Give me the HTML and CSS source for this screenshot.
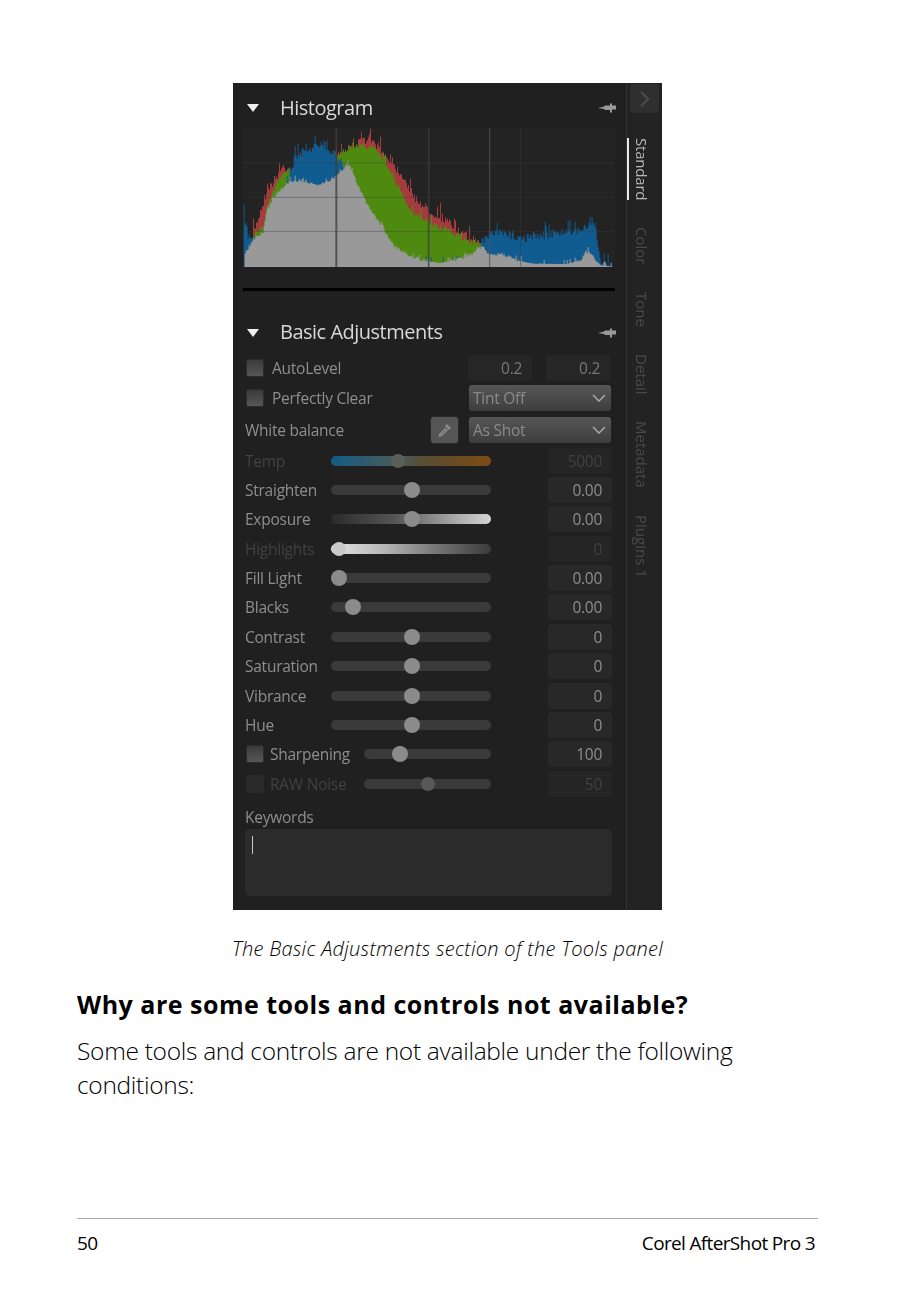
FILE: index.html
```html
<!DOCTYPE html>
<html lang="en">
<head>
<meta charset="utf-8">
<title>Corel AfterShot Pro 3 - page 50</title>
<link rel="stylesheet" href="styles.css">
</head>
<body>
<div class="page">
  <figure class="shot">
    <div class="panel">
      <div class="main">
        <div class="head hist-head">
          <span class="tri"></span><span class="head-title">Histogram</span>
          <svg class="pin" viewBox="0 0 18 10"><path d="M0 5 L6 3.5 L7 2.5 L12 2.5 L12 0.5 L14 0.5 L14 2.5 L18 2.5 L18 6.5 L14 6.5 L14 9.5 L12 9.5 L12 7 L7 7 L6 6 Z"/></svg>
        </div>
        <svg class="histogram" id="histogram" viewBox="30 135 1116 420" preserveAspectRatio="none"></svg>
        <div class="divider"></div>
        <div class="head basic-head">
          <span class="tri"></span><span class="head-title">Basic Adjustments</span>
          <svg class="pin" viewBox="0 0 18 10"><path d="M0 5 L6 3.5 L7 2.5 L12 2.5 L12 0.5 L14 0.5 L14 2.5 L18 2.5 L18 6.5 L14 6.5 L14 9.5 L12 9.5 L12 7 L7 7 L6 6 Z"/></svg>
        </div>

        <div class="row top-row">
          <span class="check"></span><span class="label check-label">AutoLevel</span>
          <span class="spacer"></span>
          <span class="num small">0.2</span><span class="num small second">0.2</span>
        </div>
        <div class="row top-row">
          <span class="check"></span><span class="label check-label">Perfectly Clear</span>
          <span class="spacer"></span>
          <span class="select">Tint Off<svg class="chev" viewBox="0 0 14 8"><path d="M1 1 L7 7 L13 1"/></svg></span>
        </div>
        <div class="row top-row wb-row">
          <span class="label">White balance</span>
          <span class="spacer"></span>
          <span class="dropper"><svg viewBox="0 0 16 16"><path class="d-fill" d="M10 2 L14 6 L12 8 L8 4 Z"/><path class="d-line" d="M9 6 L3 12 L2.5 14 L4.5 13.5 L10.5 7.5"/></svg></span>
          <span class="select">As Shot<svg class="chev" viewBox="0 0 14 8"><path d="M1 1 L7 7 L13 1"/></svg></span>
        </div>

        <div class="row slider-row off">
          <span class="label name">Temp</span>
          <span class="track temp"><i class="thumb dim" style="left:42%"></i></span>
          <span class="num faint">5000</span>
        </div>
        <div class="row slider-row">
          <span class="label name">Straighten</span>
          <span class="track"><i class="thumb" style="left:50.5%"></i></span>
          <span class="num">0.00</span>
        </div>
        <div class="row slider-row">
          <span class="label name">Exposure</span>
          <span class="track exposure"><i class="thumb" style="left:50.5%"></i></span>
          <span class="num">0.00</span>
        </div>
        <div class="row slider-row off">
          <span class="label name">Highlights</span>
          <span class="track highlights"><i class="thumb under" style="left:5%"></i></span>
          <span class="num faint">0</span>
        </div>
        <div class="row slider-row">
          <span class="label name">Fill Light</span>
          <span class="track"><i class="thumb" style="left:5%"></i></span>
          <span class="num">0.00</span>
        </div>
        <div class="row slider-row">
          <span class="label name">Blacks</span>
          <span class="track"><i class="thumb" style="left:13.5%"></i></span>
          <span class="num">0.00</span>
        </div>
        <div class="row slider-row">
          <span class="label name">Contrast</span>
          <span class="track"><i class="thumb" style="left:50.5%"></i></span>
          <span class="num">0</span>
        </div>
        <div class="row slider-row">
          <span class="label name">Saturation</span>
          <span class="track"><i class="thumb" style="left:50.5%"></i></span>
          <span class="num">0</span>
        </div>
        <div class="row slider-row">
          <span class="label name">Vibrance</span>
          <span class="track"><i class="thumb" style="left:50.5%"></i></span>
          <span class="num">0</span>
        </div>
        <div class="row slider-row">
          <span class="label name">Hue</span>
          <span class="track"><i class="thumb" style="left:50.5%"></i></span>
          <span class="num">0</span>
        </div>
        <div class="row slider-row">
          <span class="check"></span><span class="label name-short">Sharpening</span>
          <span class="track short"><i class="thumb" style="left:28%"></i></span>
          <span class="num">100</span>
        </div>
        <div class="row slider-row off">
          <span class="check dim-check"></span><span class="label name-short">RAW Noise</span>
          <span class="track short"><i class="thumb tiny" style="left:50%"></i></span>
          <span class="num faint">50</span>
        </div>

        <div class="label keywords-label">Keywords</div>
        <div class="keywords"><span class="caret"></span></div>
      </div>

      <div class="side">
        <div class="collapse"><svg viewBox="0 0 12 20"><path d="M2 2 L10 10 L2 18"/></svg></div>
        <div class="tabs">
          <span class="tab active">Standard</span>
          <span class="tab">Color</span>
          <span class="tab">Tone</span>
          <span class="tab">Detail</span>
          <span class="tab">Metadata</span>
          <span class="tab">Plugins 1</span>
        </div>
      </div>
    </div>
    <figcaption class="caption">The Basic Adjustments section of the Tools panel</figcaption>
  </figure>

  <h2 class="title">Why are some tools and controls not available?</h2>
  <p class="body-text">Some tools and controls are not available under the following conditions:</p>

  <footer class="foot">
    <span>50</span>
    <span>Corel AfterShot Pro 3</span>
  </footer>
</div>
<script src="histogram.js"></script>
</body>
</html>
```

FILE: styles.css
```css
* { box-sizing: border-box; }
html, body { margin: 0; background: #fff; }
body { font-family: "Open Sans", "Noto Sans", sans-serif; color: #000; }

.page { width: 923px; height: 1314px; padding: 83px 105px 0 77px; overflow: hidden; }
.shot { margin: 0; }

.panel {
  display: flex;
  width: 429px;
  height: 827px;
  margin-left: 156px;
  background: #1f1f1f;
}
.main { width: 393px; padding-left: 10px; background: #202020; filter: blur(0.35px); }

.head { display: flex; align-items: center; color: #d8d8d8; font-size: 20px; }
.hist-head { height: 45px; padding-top: 5px; }
.basic-head { height: 40px; margin-top: 22px; }
.tri {
  width: 0; height: 0;
  margin: 0 21px 0 4px;
  border-left: 6px solid transparent;
  border-right: 6px solid transparent;
  border-top: 8px solid #f0f0f0;
}
.head-title { flex: 1; letter-spacing: -0.5px; }
.hist-head .head-title { margin-top: -1px; }
.basic-head .head-title { margin-top: -3px; }
.pin { width: 18px; height: 10px; margin-right: 10px; fill: #9a9a9a; }

.histogram { display: block; width: 372px; height: 140px; background: #232323; }
.divider { width: 372px; height: 3px; margin-top: 20px; background: #000; }

.row { display: flex; align-items: center; }
.label { color: #8e8e8e; font-size: 15.5px; letter-spacing: -0.25px; white-space: nowrap; }
.top-row { height: 30px; padding: 0 15px 0 3px; }
.top-row .second { margin-left: 14px; margin-right: 1px; }
.wb-row { height: 31px; padding-left: 2px; margin: 1px 0; }
.spacer { flex: 1; }

.check {
  flex: none;
  width: 18px; height: 18px;
  border-radius: 2px;
  border: 1px solid #2c2c2c;
  background: linear-gradient(#3a3a3a, #575757);
}
.slider-row .check { margin-left: 1px; }
.dim-check { background: #2a2a2a; border-color: #282828; }
.check-label { margin-left: 8px; }

.num {
  flex: none;
  width: 64px; height: 26px;
  padding-right: 10px;
  border-radius: 3px;
  background: #282828;
  color: #8e8e8e;
  font-size: 15.5px;
  letter-spacing: -0.3px;
  line-height: 26px;
  text-align: right;
}
.num.faint { color: #414141; background: #252525; }
.num.small { background: #262626; color: #777; }

.select {
  display: flex;
  align-items: center;
  justify-content: space-between;
  width: 142px; height: 26px;
  padding: 0 4px;
  border-radius: 3px;
  background: linear-gradient(#565656, #3e3e3e);
  color: #8a8a8a;
  font-size: 15.5px;
  letter-spacing: -0.25px;
}
.chev { width: 14px; height: 8px; margin-right: 1px; fill: none; stroke: #a4a4a4; stroke-width: 1.6; }

.dropper {
  display: flex;
  align-items: center;
  justify-content: center;
  width: 27px; height: 26px;
  margin-right: 11px;
  border-radius: 3px;
  background: #555;
  box-shadow: 0 0 0 1px #2a2a2a;
}
.dropper svg { width: 16px; height: 16px; }
.d-fill { fill: #8a8a8a; }
.d-line { fill: none; stroke: #999; stroke-width: 1.2; }

.slider-row { height: 29.36px; padding-left: 2px; }
.slider-row.off .label { color: #414141; }
.name { width: 86px; flex: none; }
.name-short { width: 94px; flex: none; margin-left: 6px; }
.track {
  position: relative;
  flex: none;
  width: 160px; height: 10px;
  margin-right: 57px;
  border-radius: 5px;
  background: #3a3a3a;
}
.track.short { width: 127px; }
.track.temp { background: linear-gradient(90deg, #155b85, #4a5a58 42%, #5a4c30 60%, #7d4c12); }
.track.exposure { background: linear-gradient(90deg, #2a2a2a, #555 40%, #999 70%, #d4d4d4); }
.track.highlights { background: linear-gradient(90deg, #e4e4e4, #bbb 30%, #777 65%, #3a3a3a); }

.thumb {
  position: absolute;
  top: 50%;
  width: 16px; height: 16px;
  border-radius: 50%;
  background: #8b8b8b;
  transform: translate(-50%, -50%);
}
.thumb.dim { background: #5a5f58; width: 14px; height: 14px; }
.thumb.under { background: #c9c9c9; width: 14px; height: 14px; }
.thumb.tiny { background: #585858; width: 14px; height: 14px; }

.keywords-label { height: 20px; margin: 9px 0 2px 2px; line-height: 20px; }
.keywords {
  width: 367px; height: 67px;
  margin-left: 2px;
  padding: 7px;
  border-radius: 5px;
  background: #2b2b2b;
}
.caret { display: block; width: 1px; height: 18px; background: #c8c8c8; }

.side {
  flex: 1;
  border-left: 1px solid #333;
  background: #232323;
  filter: blur(0.35px);
}
.collapse {
  display: flex;
  align-items: center;
  justify-content: center;
  width: 29px; height: 29px;
  margin: 1px 0 0 3px;
  border-radius: 4px;
  background: #2f2f2f;
}
.collapse svg { width: 11px; height: 18px; fill: none; stroke: #4c4c4c; stroke-width: 2.4; }
.tabs { display: flex; flex-direction: column; align-items: flex-start; margin-top: 25px; gap: 27px; }
.tab {
  writing-mode: vertical-rl;
  padding: 0 5px;
  color: #4a4a4a;
  font-size: 15px;
  line-height: 20px;
}
.tab.active { color: #b8b8b8; border-left: 2px solid #e8e8e8; padding-left: 3px; letter-spacing: -0.2px; }

.caption { margin-top: 26px; height: 26px; text-align: center; font-size: 20px; font-style: italic; font-weight: 300; line-height: 26px; letter-spacing: 0.28px; }
.title { margin: 26px 0 0; font-size: 25px; line-height: 32px; font-weight: 700; letter-spacing: 0.5px; }
.body-text { margin: 14px 0 0; font-size: 24.5px; font-weight: 300; line-height: 34px; letter-spacing: -0.3px; width: 700px; }
.foot {
  display: flex;
  justify-content: space-between;
  margin-top: 116px;
  padding: 11px 3px 0 0;
  border-top: 1px solid #aaa;
  font-size: 19px;
  line-height: 26px;
  letter-spacing: -0.65px;
}
```

FILE: histogram.js
```js
(function () {
  var NS = 'http://www.w3.org/2000/svg';
  var svg = document.getElementById('histogram');
  var seed = 7;
  function rnd() { seed = (seed * 16807) % 2147483647; return seed / 2147483647; }

  function layer(keys, color, noise) {
    var d = 'M' + keys[0][0] + ' 552', k = 0;
    for (var x = keys[0][0]; x <= keys[keys.length - 1][0]; x += 3) {
      while (k < keys.length - 2 && x > keys[k + 1][0]) k++;
      var a = keys[k], b = keys[k + 1];
      var y = a[1] + (b[1] - a[1]) * (x - a[0]) / (b[0] - a[0]);
      var n = (rnd() - 0.5) * noise * (y > 535 ? 0.1 : 1);
      if (rnd() > 0.9) n -= noise * 1.2;
      d += 'L' + x + ' ' + Math.min(552, y + n).toFixed(1) + 'h3';
    }
    d += 'V552Z';
    var p = document.createElementNS(NS, 'path');
    p.setAttribute('d', d);
    p.setAttribute('fill', color);
    svg.appendChild(p);
  }

  var red = [[60,450],[100,325],[150,250],[175,260],[330,205],[395,170],[430,185],[470,235],[510,280],[540,340],[590,385],[630,405],[680,450],[745,482],[760,552]];
  var green = [[60,455],[90,430],[100,370],[130,300],[170,250],[180,290],[330,205],[380,185],[430,200],[470,262],[500,325],[530,385],[590,420],[650,445],[700,472],[745,484],[760,552]];
  var blue = [[32,370],[36,450],[60,470],[90,480],[170,290],[182,225],[220,200],[270,185],[300,205],[320,235],[338,255],[350,552],[730,552],[742,480],[770,456],[800,448],[860,466],[960,452],[1040,440],[1085,420],[1095,510],[1105,540],[1138,549]];
  var gray = [[32,552],[35,510],[60,468],[90,445],[100,385],[120,342],[150,312],[170,295],[200,292],[250,308],[300,285],[342,245],[360,275],[385,332],[410,378],[430,408],[470,468],[482,490],[530,520],[580,534],[620,540],[680,527],[720,512],[745,487],[770,517],[800,512],[860,534],[900,542],[1000,543],[1040,532],[1065,505],[1085,527],[1100,546],[1138,552]];

  layer(red, '#a53b3d', 26);
  layer(green, '#4f8a10', 16);
  layer(blue, '#105b90', 26);
  layer(gray, '#999999', 10);

  function line(x1, y1, x2, y2, color, w) {
    var l = document.createElementNS(NS, 'line');
    l.setAttribute('x1', x1); l.setAttribute('y1', y1);
    l.setAttribute('x2', x2); l.setAttribute('y2', y2);
    l.setAttribute('stroke', color);
    l.setAttribute('stroke-width', w);
    svg.appendChild(l);
  }
  [240, 343, 445].forEach(function (y) { line(30, y, 1146, y, 'rgba(60,60,60,.4)', 3); });
  line(310, 135, 310, 552, 'rgba(60,60,60,.75)', 6);
  line(587, 135, 587, 552, 'rgba(60,60,60,.75)', 5);
  line(770, 135, 770, 552, 'rgba(80,80,80,.9)', 3);
  line(863, 135, 863, 552, 'rgba(60,60,60,.45)', 3);
})();
```
